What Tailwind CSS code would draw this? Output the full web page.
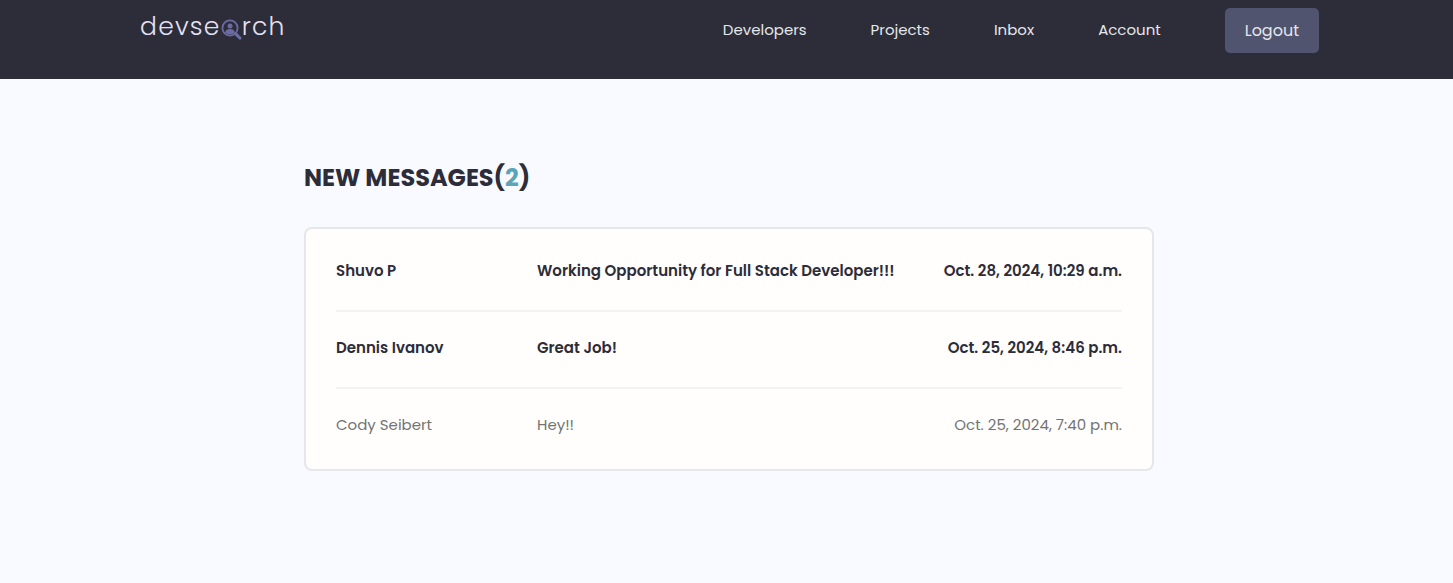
<!DOCTYPE html>
<html lang="en">
<head>
<meta charset="utf-8">
<meta name="viewport" content="width=device-width, initial-scale=1">
<title>DevSearch - Inbox</title>
<script src="https://cdn.jsdelivr.net/npm/@tailwindcss/browser@4"></script>
</head>
<body class="min-h-screen bg-[#f9faff] font-['Poppins','Inter',sans-serif] text-[#2d2d39]">
<header class="bg-[#2d2d39] pl-[5px] pt-2 pb-[26px]">
  <div class="mx-auto flex max-w-[1180px] items-start justify-between">
    <a href="#" aria-label="devsearch" class="flex items-center pl-px text-[25px] leading-[38px] font-light tracking-wider text-[#e4e1f5]">
      <span>devse</span>
      <svg class="mt-1.5 h-[22px] w-[21px]" viewBox="0 0 21 22" fill="none" aria-hidden="true">
        <circle cx="9" cy="9" r="7.6" stroke="#6b6ba3" stroke-width="1.8"/>
        <circle cx="9" cy="7" r="2.5" fill="#6b6ba3"/>
        <path d="M4.2 13.6c.3-2.4 2.2-3.5 4.8-3.5s4.5 1.100 4.800 3.500c-2.700 2.500-6.900 2.500-9.600 0z" fill="#6b6ba3"/>
        <path d="M14.500 14.600l4.300 4.400" stroke="#6b6ba3" stroke-width="3.200" stroke-linecap="round"/>
      </svg>
      <span>rch</span>
    </a>
    <nav aria-label="Main">
      <ul class="flex items-center gap-16 text-[15px] text-[#e5e7eb]">
        <li><a href="#">Developers</a></li>
        <li><a href="#">Projects</a></li>
        <li><a href="#">Inbox</a></li>
        <li><a href="#">Account</a></li>
        <li><button type="button" class="h-[45px] rounded-[5px] bg-[#51546e] px-5 text-base">Logout</button></li>
      </ul>
    </nav>
  </div>
</header>
<main class="pl-[5px] pt-[81px]">
  <div class="mx-auto max-w-[850px]">
    <h1 class="text-2xl leading-9 font-bold">NEW MESSAGES(<span class="text-[#5aa5b9]">2</span>)</h1>
    <ul class="mt-[31px] rounded-lg border-2 border-[#e5e7eb] bg-[#fffefd] px-[30px] pt-1.5 pb-[5px] text-[15px] leading-5">
      <li class="border-b-2 border-[#f3f3f3]">
        <a href="#" class="flex items-center pt-[26px] pb-[29px] font-semibold"><span class="w-[201px]">Shuvo P</span><span class="flex-1">Working Opportunity for Full Stack Developer!!!</span><time>Oct. 28, 2024, 10:29 a.m.</time></a>
      </li>
      <li class="border-b-2 border-[#f3f3f3]">
        <a href="#" class="flex items-center pt-[26px] pb-[29px] font-semibold"><span class="w-[201px]">Dennis Ivanov</span><span class="flex-1">Great Job!</span><time>Oct. 25, 2024, 8:46 p.m.</time></a>
      </li>
      <li>
        <a href="#" class="flex items-center pt-[26px] pb-[29px] text-[#737373]"><span class="w-[201px]">Cody Seibert</span><span class="flex-1">Hey!!</span><time>Oct. 25, 2024, 7:40 p.m.</time></a>
      </li>
    </ul>
  </div>
</main>
</body>
</html>
